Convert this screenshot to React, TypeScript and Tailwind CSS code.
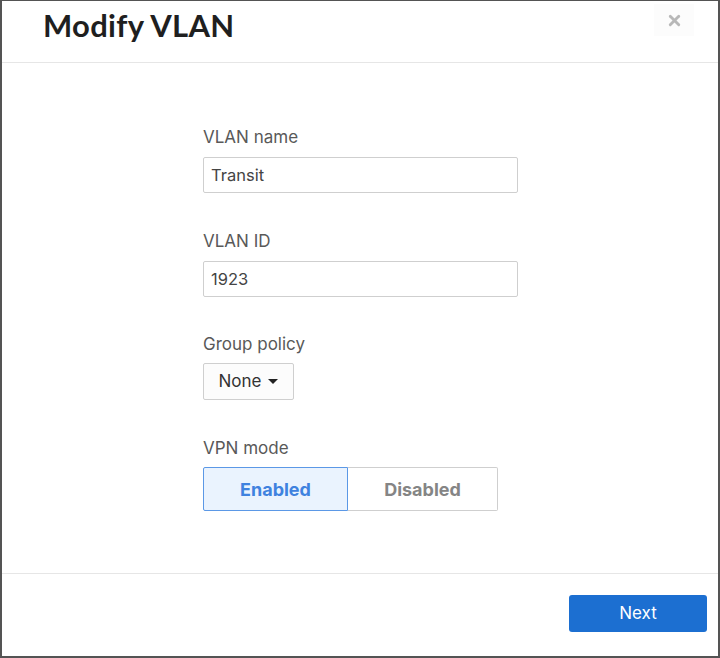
import { X } from 'lucide-react'

const font = { fontFamily: 'Inter, "Liberation Sans", Arial, sans-serif' }

function Field({ label, value }: { label: string; value: string }) {
  return (
    <div className="flex flex-col">
      <label className="h-6 text-[17px] leading-6 text-[#595959]">{label}</label>
      <input
        readOnly
        value={value}
        className="mt-2 h-9 w-[315px] rounded-[2px] border border-[#cfcfcf] bg-white px-[7px] text-[16.5px] text-[#444] outline-none"
      />
    </div>
  )
}

export default function App() {
  return (
    <div className="h-[658px] w-[720px] bg-white" style={font}>
      <div className="flex h-full w-full flex-col border-x-2 border-b-2 border-t border-[#545454]">
        {/* header */}
        <div className="flex h-[62px] shrink-0 items-start justify-between border-b border-[#e6e6e6] pl-[41px] pr-[24px]">
          <h1 className="mt-[1px] font-['Lato',sans-serif] text-[31px] font-bold tracking-[0.3px] text-[#1f1f1f]">Modify VLAN</h1>
          <button className="mt-[3px] flex h-8 w-10 items-center justify-center bg-[#fcfcfc] text-[#b8b8b8]" aria-label="Close">
            <X className="h-[17px] w-[17px]" strokeWidth={4} />
          </button>
        </div>

        {/* body */}
        <div className="flex flex-1 flex-col pl-[201px] pt-[62px]">
          <Field label="VLAN name" value="Transit" />
          <div className="mt-[36px]">
            <Field label="VLAN ID" value="1923" />
          </div>

          <div className="mt-[35px] flex flex-col">
            <span className="h-6 text-[17px] leading-6 text-[#595959]">Group policy</span>
            <button className="mt-[7px] flex h-[37px] w-[91px] items-center justify-center gap-[7px] rounded-[2px] border border-[#cfcfcf] bg-[#fcfcfc] text-[17px] text-[#333]">
              None
              <span className="h-0 w-0 border-x-[5px] border-t-[5px] border-x-transparent border-t-[#222]" />
            </button>
          </div>

          <div className="mt-[36px] flex flex-col">
            <span className="h-6 text-[17px] leading-6 text-[#595959]">VPN mode</span>
            <div className="mt-[7px] flex h-[44px]">
              <button className="w-[145px] rounded-l-[2px] border border-[#5b98e6] bg-[#eaf3fe] text-[18px] font-bold text-[#3f82df]">Enabled</button>
              <button className="w-[150px] rounded-r-[2px] border border-l-0 border-[#cfcfcf] bg-white text-[18px] font-bold text-[#858585]">Disabled</button>
            </div>
          </div>
        </div>

        {/* footer */}
        <div className="flex h-[83px] shrink-0 items-start justify-end border-t border-[#e6e6e6] pr-[11px] pt-[21px]">
          <button className="h-[37px] w-[138px] rounded-[3px] bg-[#1c6fd1] text-[17px] text-white">Next</button>
        </div>
      </div>
    </div>
  )
}
